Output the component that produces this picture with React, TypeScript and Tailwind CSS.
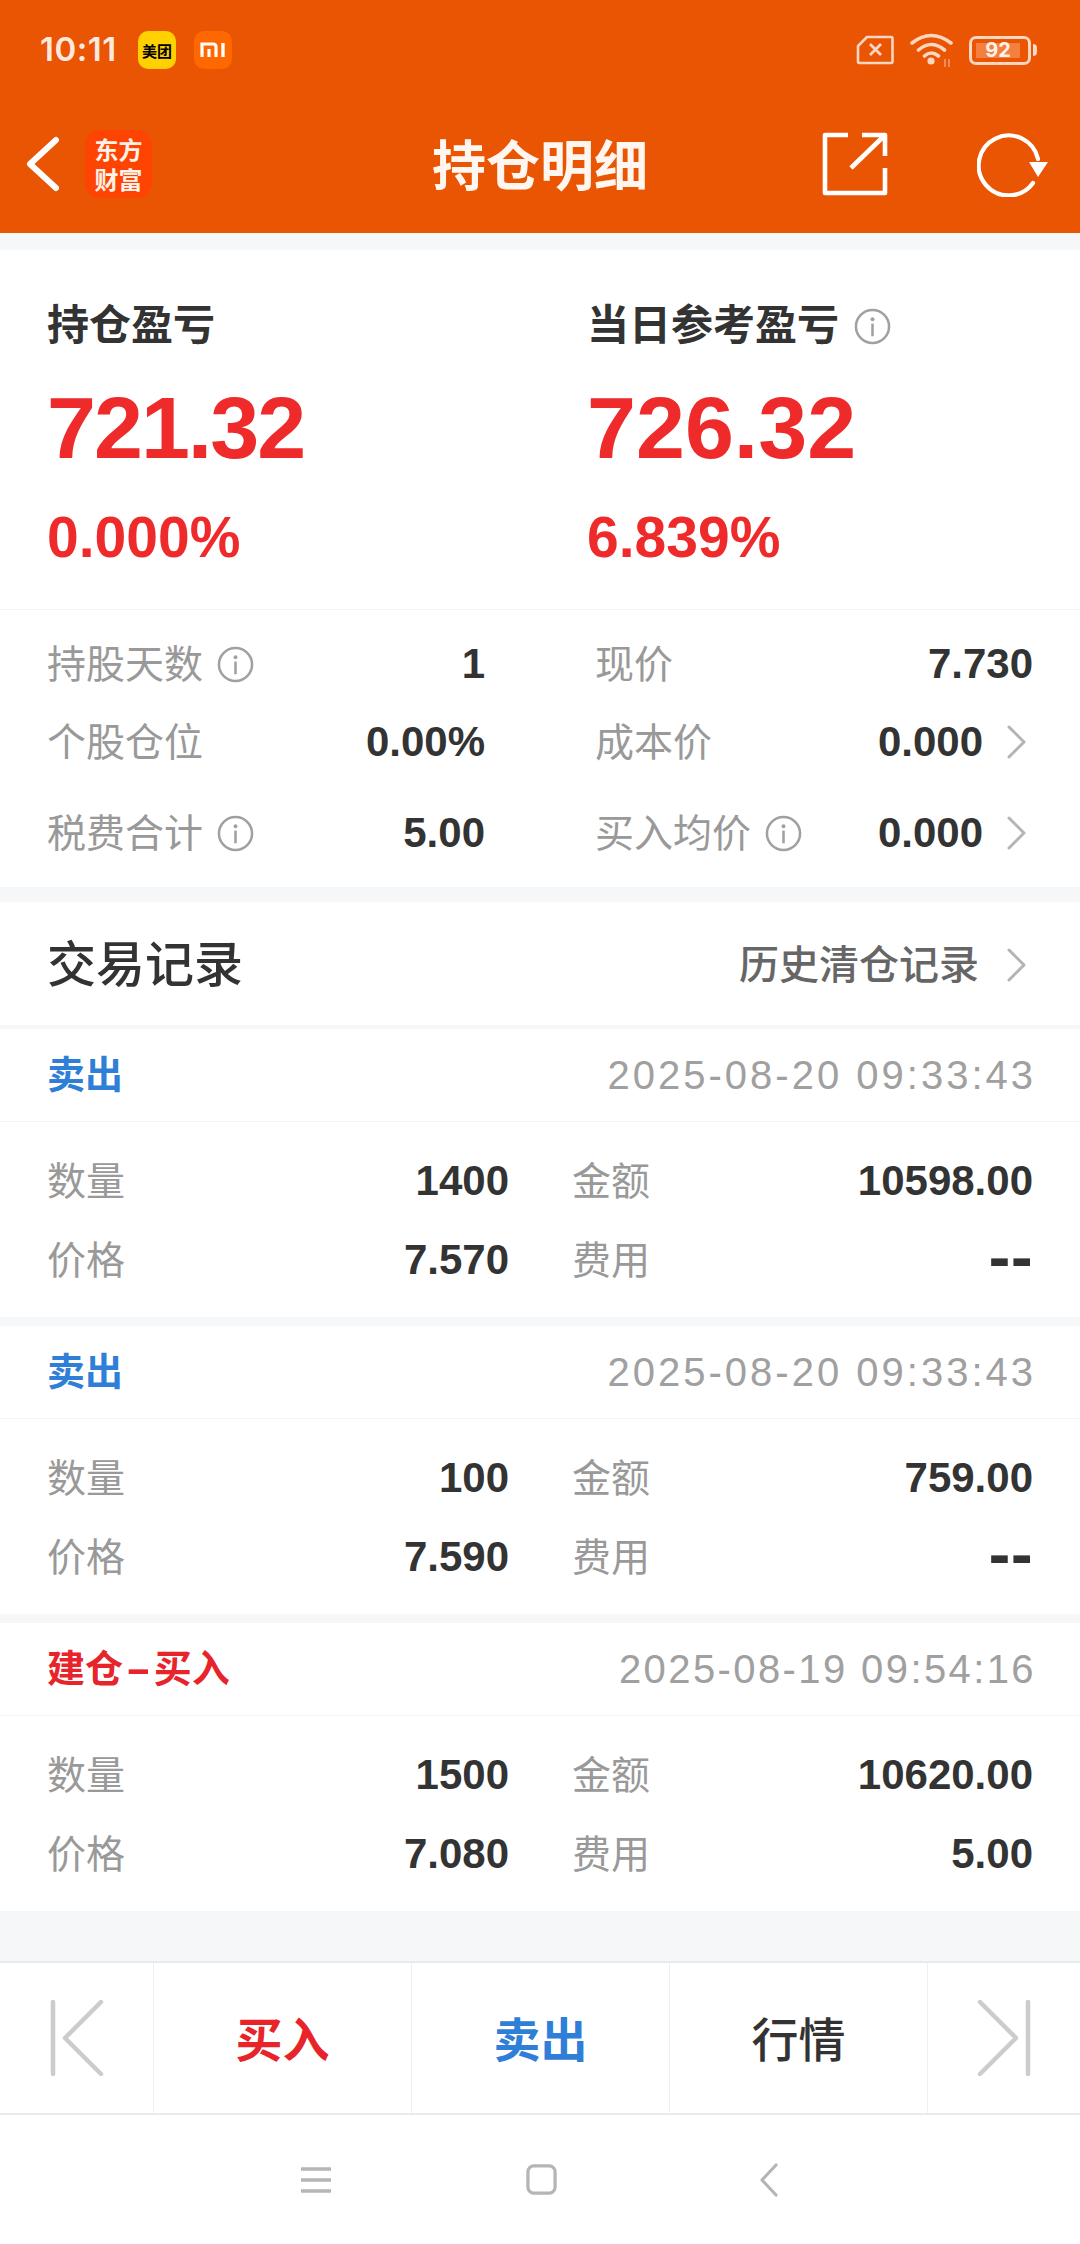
import React from 'react';

const SANS = "font-['Liberation_Sans','Noto_Sans_CJK_SC',sans-serif]";

function InfoIcon() {
  return (
    <svg width="37" height="37" viewBox="0 0 38 38" fill="none" className="shrink-0">
      <circle cx="19" cy="19" r="17" stroke="#a0a0a0" strokeWidth="2.6" />
      <circle cx="19" cy="11.5" r="2" fill="#a0a0a0" />
      <rect x="17.7" y="16" width="2.6" height="13" fill="#a0a0a0" />
    </svg>
  );
}

function Chevron() {
  return (
    <svg width="22" height="34" viewBox="0 0 22 34" fill="none" className="mr-[5px] shrink-0">
      <path d="M3 2 L18 17 L3 32" stroke="#b4b4b4" strokeWidth="3" strokeLinecap="round" strokeLinejoin="round" />
    </svg>
  );
}

function StatusBar() {
  return (
    <div className="flex h-[100px] items-center justify-between pl-[40px] pr-[43px]">
      <div className="flex items-center">
        <span className="w-[81px] text-[33px] font-semibold text-[#fde9dd] font-['Inter',sans-serif] tracking-[0.5px] whitespace-nowrap">10:11</span>
        <div className="ml-[17px] flex h-[38px] w-[38px] items-center justify-center rounded-[10px] bg-[#ffd100] text-[15px] font-bold leading-none text-black font-['Noto_Sans_CJK_SC',sans-serif] whitespace-nowrap">
          美团
        </div>
        <div className="ml-[18px] flex h-[38px] w-[38px] items-center justify-center rounded-[10px] bg-[#ff6700]">
          <svg width="26" height="18" viewBox="0 0 26 18" fill="none">
            <path d="M2 16 V3 H13 Q16 3 16 6 V16 M9 16 V8" stroke="#fff" strokeWidth="3.2" />
            <path d="M23 2 V16" stroke="#fff" strokeWidth="3.4" />
          </svg>
        </div>
      </div>
      <div className="flex items-center">
        <svg width="38" height="30" viewBox="0 0 38 30" fill="none">
          <path d="M11 2 H35 Q36.5 2 36.5 3.5 V26.5 Q36.5 28 35 28 H3.5 Q2 28 2 26.5 V11 Z" stroke="#fbd6c0" strokeWidth="2.6" strokeLinejoin="round" />
          <path d="M14 9 L25 20 M25 9 L14 20" stroke="#fbd6c0" strokeWidth="2.8" />
        </svg>
        <svg width="44" height="36" viewBox="0 0 44 36" fill="none" className="ml-[16px]">
          <path d="M2 11 Q21 -4 41 11 M8.5 18 Q21 7 34.5 18 M14.5 24 Q21 18 28.5 24" stroke="#fbd6c0" strokeWidth="3.6" strokeLinecap="round" />
          <circle cx="21" cy="29" r="3.6" fill="#fbd6c0" />
          <path d="M35 27 V35 M39 27 V35" stroke="#fbd6c0" strokeOpacity="0.55" strokeWidth="1.6" />
        </svg>
        <div className="ml-[15px] flex h-[29px] w-[62px] items-center rounded-[7px] border-[3px] border-[#fbd6c0] px-[4px]">
          <div className="flex h-[15px] w-[44px] items-center justify-center bg-[#f47f3f] text-[20px] font-bold text-[#fff3ea] font-['Inter',sans-serif]">92</div>
        </div>
        <div className="ml-[2px] h-[12px] w-[4px] rounded-r-full bg-[#fbd6c0]" />
      </div>
    </div>
  );
}

function NavBar() {
  return (
    <div className="relative flex h-[133px] items-center justify-between pb-[6px] pl-[26px] pr-[31px]">
      <div className="flex items-center">
        <svg width="36" height="60" viewBox="0 0 36 60" fill="none">
          <path d="M30 6 L4 30 L30 54" stroke="#fff" strokeWidth="6" strokeLinecap="round" strokeLinejoin="round" />
        </svg>
        <div className="ml-[23px] flex h-[68px] w-[67px] items-center justify-center rounded-[15px] bg-[#fe4403] font-['Noto_Sans_CJK_SC',sans-serif]">
          <span className="block w-[48px] break-all text-center text-[24px] font-bold leading-[30px] text-[#fff1e8]">东方财富</span>
        </div>
      </div>
      <div className="absolute left-1/2 top-[34px] -translate-x-1/2 text-[54px] font-bold leading-[66px] text-[#fff6f0] whitespace-nowrap">持仓明细</div>
      <div className="flex items-center">
        <svg width="66" height="66" viewBox="0 0 66 66" fill="none">
          <path d="M26 4 H3 V62 H63 V37 M40 4 H63 V25 M63 4 L29 37" stroke="#fff" strokeWidth="4.6" strokeLinejoin="round" />
        </svg>
        <svg width="72" height="66" viewBox="0 0 72 66" fill="none" className="ml-[89px]">
          <path d="M56 52 A30 30 0 1 1 61 28" stroke="#fff" strokeWidth="4.2" strokeLinecap="round" />
          <path d="M52 31 H71 L61 46 Z" fill="#fff" />
        </svg>
      </div>
    </div>
  );
}

function Summary({ title, value, pct, info, valueClass, className }: { title: string; value: string; pct: string; info?: boolean; valueClass: string; className: string }) {
  return (
    <div className={className}>
      <div className="flex h-[60px] items-center gap-[15px]">
        <span className="text-[42px] font-bold leading-none text-[#333333]">{title}</span>
        {info && <InfoIcon />}
      </div>
      <div className={`mt-[26px] h-[92px] text-[88px] font-bold leading-[92px] text-[#ee2a2a] ${valueClass}`}>{value}</div>
      <div className="mt-[31px] text-[57px] font-bold leading-[64px] text-[#ee2a2a]">{pct}</div>
    </div>
  );
}

function StatCell({ label, value, info, arrow }: { label: string; value: string; info?: boolean; arrow?: boolean }) {
  return (
    <div className="flex items-center gap-[14px]">
      <span className="text-[39px] leading-none text-[#999999] whitespace-nowrap">{label}</span>
      {info && <InfoIcon />}
      <span className="ml-auto text-[42px] font-bold leading-none text-[#333333]">{value}</span>
      {arrow && <div className="ml-[9px]"><Chevron /></div>}
    </div>
  );
}

type Trade = { side: string; color: string; time: string; timeClass: string; qty: string; amount: string; price: string; fee: string };

const trades: Trade[] = [
  { side: '卖出', color: 'text-[#2f7fd8]', time: '2025-08-20 09:33:43', timeClass: 'tracking-[3px]', qty: '1400', amount: '10598.00', price: '7.570', fee: '--' },
  { side: '卖出', color: 'text-[#2f7fd8]', time: '2025-08-20 09:33:43', timeClass: 'tracking-[3px]', qty: '100', amount: '759.00', price: '7.590', fee: '--' },
  { side: '建仓-买入', color: 'text-[#e8242b]', time: '2025-08-19 09:54:16', timeClass: 'tracking-[2.4px]', qty: '1500', amount: '10620.00', price: '7.080', fee: '5.00' },
];

function TradeField({ label, value, className }: { label: string; value: string; className: string }) {
  return (
    <div className={`flex h-[40px] items-center justify-between ${className}`}>
      <span className="text-[39px] leading-none text-[#999999]">{label}</span>
      {value === '--' ? (
        <span className="text-[54px] font-bold leading-none text-[#333333] font-['DejaVu_Sans',sans-serif]">{value}</span>
      ) : (
        <span className="text-[42px] font-bold leading-none text-[#333333]">{value}</span>
      )}
    </div>
  );
}

function SideLabel({ text, color }: { text: string; color: string }) {
  const parts = text.split('-');
  return (
    <span className={`text-[38px] font-bold leading-none ${color}`}>
      {parts[0]}
      {parts[1] && (
        <>
          <span className="mx-[9px] inline-block scale-x-[2]">-</span>
          {parts[1]}
        </>
      )}
    </span>
  );
}

function TradeCard({ trade }: { trade: Trade }) {
  return (
    <div className="bg-white">
      <div className="flex h-[93px] items-center justify-between border-b border-[#f2f3f5] px-[47px]">
        <SideLabel text={trade.side} color={trade.color} />
        <span className={`-mr-[3px] text-[40px] leading-none text-[#a0a0a0] ${trade.timeClass}`}>{trade.time}</span>
      </div>
      <div className="flex flex-col gap-[39px] pb-[37px] pl-[47px] pr-[47px] pt-[39px]">
        <div className="flex">
          <TradeField label="数量" value={trade.qty} className="w-[462px]" />
          <TradeField label="金额" value={trade.amount} className="ml-[63px] flex-1" />
        </div>
        <div className="flex">
          <TradeField label="价格" value={trade.price} className="w-[462px]" />
          <TradeField label="费用" value={trade.fee} className="ml-[63px] flex-1" />
        </div>
      </div>
    </div>
  );
}

function ActionBar() {
  return (
    <div className="flex h-[154px] border-y-2 border-[#e9eaec] bg-white">
      <div className="flex w-[154px] items-center justify-center border-r border-[#eeeff1]">
        <svg width="54" height="76" viewBox="0 0 54 76" fill="none">
          <path d="M3 2 V74" stroke="#cccccc" strokeWidth="4.5" strokeLinecap="round" />
          <path d="M51 2 L15 38 L51 74" stroke="#cccccc" strokeWidth="4.5" strokeLinecap="round" strokeLinejoin="round" />
        </svg>
      </div>
      <div className="flex w-[258px] items-center justify-center border-r border-[#eeeff1] pt-[6px] text-[47px] font-bold text-[#e8242b]">买入</div>
      <div className="flex w-[258px] items-center justify-center border-r border-[#eeeff1] pt-[6px] text-[47px] font-bold text-[#2f7fd8]">卖出</div>
      <div className="flex w-[258px] items-center justify-center border-r border-[#eeeff1] pt-[6px] text-[47px] font-medium text-[#333333]">行情</div>
      <div className="flex flex-1 items-center justify-center">
        <svg width="54" height="76" viewBox="0 0 54 76" fill="none">
          <path d="M51 2 V74" stroke="#cccccc" strokeWidth="4.5" strokeLinecap="round" />
          <path d="M3 2 L39 38 L3 74" stroke="#cccccc" strokeWidth="4.5" strokeLinecap="round" strokeLinejoin="round" />
        </svg>
      </div>
    </div>
  );
}

function SystemNav() {
  return (
    <div className="flex flex-1 items-center justify-center bg-white">
      <svg width="30" height="28" viewBox="0 0 30 28" fill="none">
        <path d="M0 3 H30 M0 14 H30 M0 25 H30" stroke="#b5b5b5" strokeWidth="3.6" />
      </svg>
      <svg width="31" height="31" viewBox="0 0 32 32" fill="none" className="ml-[195px]">
        <rect x="2" y="2" width="28" height="28" rx="6" stroke="#b5b5b5" strokeWidth="3.4" />
      </svg>
      <svg width="20" height="34" viewBox="0 0 20 34" fill="none" className="ml-[202px]">
        <path d="M17 2 L3 17 L17 32" stroke="#b5b5b5" strokeWidth="3.2" strokeLinecap="round" strokeLinejoin="round" />
      </svg>
    </div>
  );
}

export default function App() {
  return (
    <div className={`flex h-[2244px] w-[1080px] flex-col overflow-hidden bg-[#f6f7f9] ${SANS}`}>
      <div className="h-[233px] shrink-0 bg-[#ea5504]">
        <StatusBar />
        <NavBar />
      </div>

      <div className="mt-[17px] bg-white">
        <div className="flex h-[360px] border-b border-[#f3f4f6] pt-[46px]">
          <Summary title="持仓盈亏" value="721.32" pct="0.000%" valueClass="tracking-[-2px]" className="w-[587px] pl-[47px]" />
          <Summary title="当日参考盈亏" value="726.32" pct="6.839%" info valueClass="" className="flex-1" />
        </div>
        <div className="grid h-[277px] grid-cols-[438px_1fr] grid-rows-[78px_78px_104px] gap-x-[110px] px-[47px] pt-[15px]">
          <StatCell label="持股天数" value="1" info />
          <StatCell label="现价" value="7.730" />
          <StatCell label="个股仓位" value="0.00%" />
          <StatCell label="成本价" value="0.000" arrow />
          <StatCell label="税费合计" value="5.00" info />
          <StatCell label="买入均价" value="0.000" info arrow />
        </div>
      </div>

      <div className="mt-[15px] flex h-[123px] items-center justify-between bg-white pl-[47px] pr-[47px] pt-[3px]">
        <span className="text-[49px] font-medium leading-none text-[#333333]">交易记录</span>
        <div className="flex items-center gap-[27px]">
          <span className="text-[40px] font-medium leading-none text-[#666666]">历史清仓记录</span>
          <Chevron />
        </div>
      </div>

      <div className="mt-[4px] flex flex-col gap-[9px]">
        {trades.map((t, i) => (
          <TradeCard key={i} trade={t} />
        ))}
      </div>

      <div className="h-[50px] shrink-0" />
      <ActionBar />
      <SystemNav />
    </div>
  );
}
